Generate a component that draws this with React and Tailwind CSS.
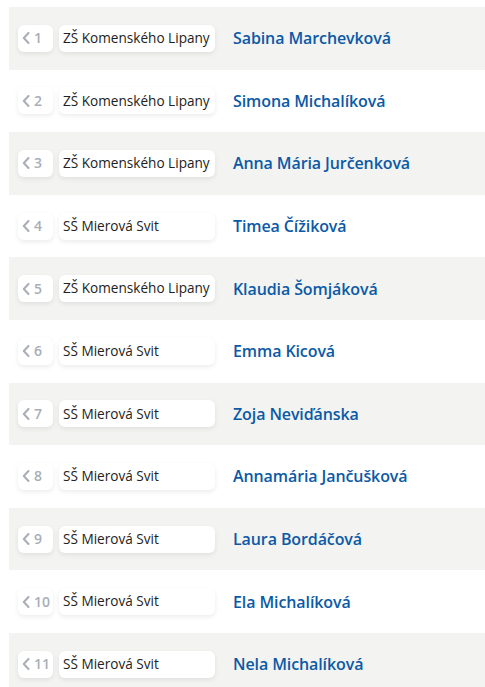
const rows = [
  { school: 'ZŠ Komenského Lipany', name: 'Sabina Marchevková' },
  { school: 'ZŠ Komenského Lipany', name: 'Simona Michalíková' },
  { school: 'ZŠ Komenského Lipany', name: 'Anna Mária Jurčenková' },
  { school: 'SŠ Mierová Svit', name: 'Timea Čížiková' },
  { school: 'ZŠ Komenského Lipany', name: 'Klaudia Šomjáková' },
  { school: 'SŠ Mierová Svit', name: 'Emma Kicová' },
  { school: 'SŠ Mierová Svit', name: 'Zoja Neviďánska' },
  { school: 'SŠ Mierová Svit', name: 'Annamária Jančušková' },
  { school: 'SŠ Mierová Svit', name: 'Laura Bordáčová' },
  { school: 'SŠ Mierová Svit', name: 'Ela Michalíková' },
  { school: 'SŠ Mierová Svit', name: 'Nela Michalíková' },
]

export default function App() {
  return (
    <div className="bg-white pl-[9px] pt-[7px] h-[687px] overflow-hidden" style={{ fontFamily: '"Open Sans", sans-serif' }}>
      {rows.map((r, i) => (
        <Row key={i} rank={i + 1} {...r} shaded={i % 2 === 0} />
      ))}
    </div>
  )
}

function Row({ rank, school, name, shaded }) {
  return (
    <div className={`flex items-center h-[62.6px] pl-[9px] ${shaded ? 'bg-[#f3f3f2]' : 'bg-white'}`}>
      <div className="flex items-center w-[35px] h-[27px] rounded-[6px] bg-white shadow-[0_2px_5px_rgba(0,0,0,0.08)] pl-[4px] text-[#a9aeb6]">
        <svg width="8" height="12" viewBox="0 0 8 12" className="shrink-0">
          <path d="M6.5 1 L1.8 6 L6.5 11" fill="none" stroke="currentColor" strokeWidth="2" strokeLinecap="round" strokeLinejoin="round" />
        </svg>
        <span className="text-[14px] font-semibold ml-[4px] leading-none">{rank}</span>
      </div>
      <div className="flex items-center w-[156px] h-[27px] ml-[6px] rounded-[6px] bg-white shadow-[0_2px_5px_rgba(0,0,0,0.08)] pl-[4px] text-[13.6px] text-[#222] whitespace-nowrap">
        {school}
      </div>
      <div className="ml-[18px] text-[16px] font-semibold text-[#0b5aa6] tracking-[-0.1px]">{name}</div>
    </div>
  )
}
